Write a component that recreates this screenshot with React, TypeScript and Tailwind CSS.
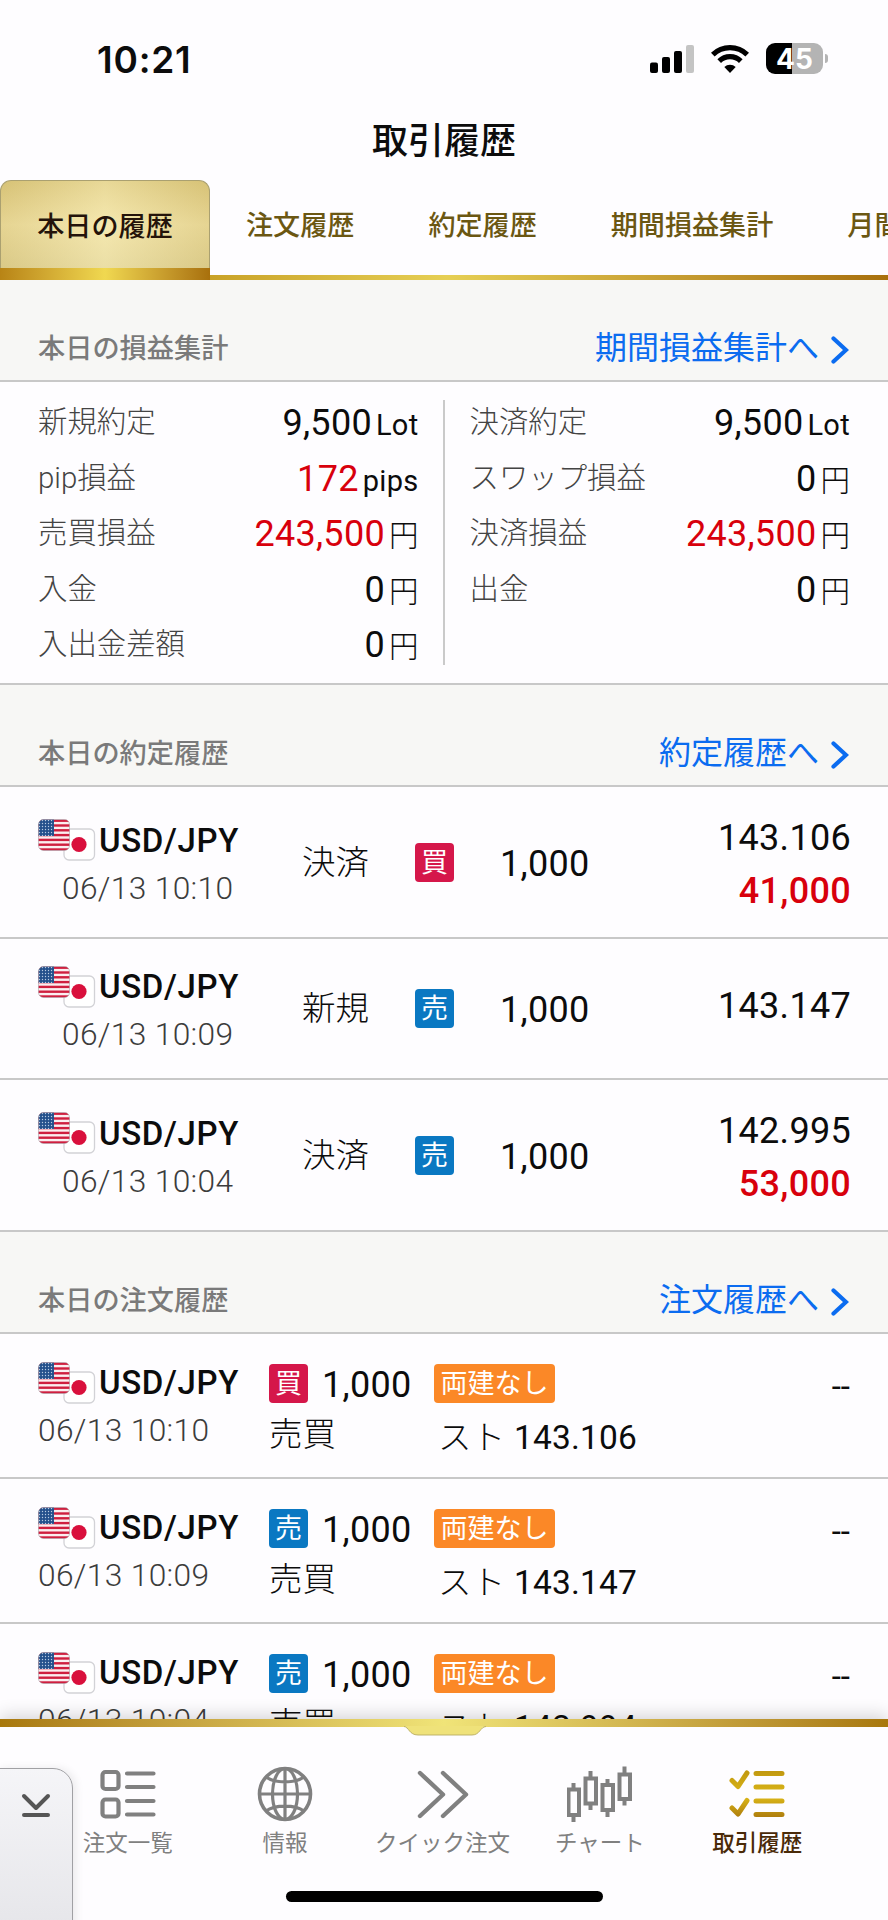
import type { ReactNode } from "react";

type Side = "buy" | "sell";

const tabs = ["注文履歴", "約定履歴", "期間損益集計", "月間損益集計"];

const summaryLeft = [
  { label: "新規約定", value: "9,500", unit: "Lot", red: false },
  { label: "pip損益", value: "172", unit: "pips", red: true },
  { label: "売買損益", value: "243,500", unit: "円", red: true },
  { label: "入金", value: "0", unit: "円", red: false },
  { label: "入出金差額", value: "0", unit: "円", red: false },
];

const summaryRight = [
  { label: "決済約定", value: "9,500", unit: "Lot", red: false },
  { label: "スワップ損益", value: "0", unit: "円", red: false },
  { label: "決済損益", value: "243,500", unit: "円", red: true },
  { label: "出金", value: "0", unit: "円", red: false },
];

const executions: { time: string; kind: string; side: Side; price: string; profit?: string }[] = [
  { time: "06/13 10:10", kind: "決済", side: "buy", price: "143.106", profit: "41,000" },
  { time: "06/13 10:09", kind: "新規", side: "sell", price: "143.147" },
  { time: "06/13 10:04", kind: "決済", side: "sell", price: "142.995", profit: "53,000" },
];

const orders: { time: string; side: Side; price: string }[] = [
  { time: "06/13 10:10", side: "buy", price: "143.106" },
  { time: "06/13 10:09", side: "sell", price: "143.147" },
  { time: "06/13 10:04", side: "sell", price: "142.994" },
];

function StatusBar() {
  return (
    <div className="flex h-[104px] shrink-0 items-start justify-between pl-[97px] pr-[60px]">
      <span className="mt-[36px] font-['Inter'] text-[37px] font-semibold leading-[47px] tracking-[0.8px]">10:21</span>
      <div className="mt-[43px] flex h-[31px] items-center">
        <svg width="45" height="31" viewBox="0 0 45 31">
          <rect x="0" y="19.5" width="8" height="10.5" rx="2" />
          <rect x="12" y="14" width="8" height="16" rx="2" />
          <rect x="24" y="8" width="8" height="22" rx="2" />
          <rect x="36" y="2" width="8" height="28" rx="2" fill="#c4c4c4" />
        </svg>
        <svg className="ml-[16px]" width="38" height="31" viewBox="0 0 38 31" fill="none" stroke="#000" strokeWidth="5.2">
          <path d="M1.8 11.6a24.6 24.6 0 0 1 34.4 0" />
          <path d="M8.2 18.1a15.5 15.5 0 0 1 21.6 0" />
          <path d="M19 30l-5.700-5.900a8.200 8.200 0 0 1 11.400 0z" fill="#000" stroke="none" />
        </svg>
        <div className="ml-[17px] flex h-[31px] w-[57px] items-center justify-center rounded-[9px] bg-linear-to-r from-black from-46% to-[#b4b4b4] to-46% font-['Inter'] text-[28px] font-bold leading-none text-white">
          45
        </div>
        <div className="ml-[2px] h-[9px] w-[3px] rounded-r-full bg-[#b4b4b4]" />
      </div>
    </div>
  );
}

function SectionHeader({ title, link }: { title: string; link: string }) {
  return (
    <div className="flex h-[102px] shrink-0 items-end border-b-2 border-[#c8c8c8] bg-[#f7f7f5] pl-[38px] pr-[39px]">
      <div className="flex h-[64px] flex-1 items-center justify-between">
        <span className="pt-[3px] text-[27.2px] font-medium text-[#7a7a7a]">{title}</span>
        <div className="flex items-center">
          <span className="text-[32px] leading-[60px] text-[#0b6cf0]">{link}</span>
          <svg className="ml-[12px] mt-[4px]" width="18" height="28" viewBox="0 0 18 28" fill="none" stroke="#0b6cf0" strokeWidth="4.2" strokeLinecap="round">
            <path d="M2.5 2.5L15 14L2.5 25.5" />
          </svg>
        </div>
      </div>
    </div>
  );
}

function SummaryColumn({ rows }: { rows: typeof summaryLeft }) {
  return (
    <div className="flex flex-1 flex-col">
      {rows.map((r) => (
        <div key={r.label} className="flex h-[55.6px] items-start justify-between leading-[55.6px]">
          <span className="text-[29.4px] font-light text-[#444]">{r.label}</span>
          <span className="flex items-baseline pt-px">
            <span className={r.red ? "text-[36px] tracking-[0.3px] text-[#d8000c]" : "text-[36px] tracking-[0.3px]"}>{r.value}</span>
            {r.unit === "円" ? (
              <span className="ml-[4px] text-[29.5px] font-light">円</span>
            ) : (
              <span className="ml-[4px] text-[29px] tracking-[0.3px]">{r.unit}</span>
            )}
          </span>
        </div>
      ))}
    </div>
  );
}

function Flags() {
  return (
    <svg className="shrink-0" width="58" height="42" viewBox="0 0 58 42">
      <defs>
        <clipPath id="us-flag">
          <rect x="0.5" y="0.5" width="31" height="31" rx="5" />
        </clipPath>
        <pattern id="us-stars" width="3" height="3" patternUnits="userSpaceOnUse">
          <rect width="3" height="3" fill="#24508c" />
          <circle cx="1.5" cy="1.5" r="0.7" fill="#b9cbe2" />
        </pattern>
      </defs>
      <rect x="26" y="10" width="30.5" height="31" rx="5" fill="#fff" stroke="#d2d2d6" strokeWidth="1.3" />
      <circle cx="41" cy="25.5" r="7.6" fill="#d9103c" />
      <g clipPath="url(#us-flag)">
        <rect width="32" height="32" fill="#fbeef0" />
        {[0, 1, 2, 3, 4, 5, 6].map((i) => (
          <rect key={i} y={0.5 + i * 4.8} width="32" height="2.4" fill="#cf1f3f" />
        ))}
        <rect width="16" height="17" fill="url(#us-stars)" />
      </g>
      <rect x="0.5" y="0.5" width="31" height="31" rx="5" fill="none" stroke="#9a8f99" strokeOpacity="0.5" />
    </svg>
  );
}

function Pair() {
  return (
    <div className="flex h-[47px] items-center">
      <Flags />
      <span className="ml-[3px] text-[33px] font-medium leading-[47px] tracking-[0.65px]">USD/JPY</span>
    </div>
  );
}

function SideChip({ side }: { side: Side }) {
  const color = side === "buy" ? "bg-[#d5174a]" : "bg-[#0a78c2]";
  return (
    <span className={`flex h-[39px] w-[39px] shrink-0 items-center justify-center rounded-[4px] pt-px text-[27px] leading-[38px] text-white ${color}`}>
      {side === "buy" ? "買" : "売"}
    </span>
  );
}

function NavItem({ label, active, children }: { label: string; active?: boolean; children: ReactNode }) {
  return (
    <div className="flex flex-col items-center">
      <div className="flex h-[60px] items-center justify-center">{children}</div>
      <span className={`mt-[3px] whitespace-nowrap text-[22.5px] leading-[32px] ${active ? "font-medium text-[#4a2a08]" : "text-[#808080]"}`}>
        {label}
      </span>
    </div>
  );
}

function BottomNav() {
  return (
    <div className="relative z-10 flex h-[201px] shrink-0 flex-col bg-[#fefdff] shadow-[0_-4px_16px_rgba(0,0,0,0.16)]">
      <div className="h-[8px] bg-linear-to-r from-[#a8780c] via-[#f0e478] to-[#a8780c]" />
      {/* Drawer handle under the gold line */}
      <svg className="absolute left-[404px] top-[7px]" width="82" height="10" viewBox="0 0 82 10">
        <path d="M0 0C5 1 5 9 14 9H68C76 9 76 1 82 0z" fill="#efe27a" />
        <path d="M0 0.5C5 1 5 9 14 9H68C76 9 76 1 82 0.5" fill="none" stroke="#b9ad62" strokeWidth="0.9" />
      </svg>
      <div className="ml-[49px] mt-[37px] grid w-[787px] grid-cols-5">
        <NavItem label="注文一覧">
          <svg width="56" height="50" viewBox="0 0 56 50" fill="none" stroke="#808080" strokeWidth="4.2" strokeLinecap="round">
            <rect x="2.5" y="3" width="16" height="17" rx="3" />
            <rect x="2.5" y="30.5" width="16" height="17" rx="3" />
            <path d="M27 4.5H53.5M27 18H53.5M27 32H53.5M27 45.5H53.5" />
          </svg>
        </NavItem>
        <NavItem label="情報">
          <svg width="56" height="56" viewBox="0 0 56 56" fill="none" stroke="#808080" strokeWidth="3.2">
            <circle cx="28" cy="28" r="25.5" strokeWidth="3.6" />
            <ellipse cx="28" cy="28" rx="12.5" ry="25.5" />
            <path d="M28 2V54M2 28H54M9 11C18 17.5 38 17.5 47 11M9 45C18 38.5 38 38.5 47 45" />
          </svg>
        </NavItem>
        <NavItem label="クイック注文">
          <svg className="ml-[2px]" width="54" height="50" viewBox="0 0 54 50" fill="none" stroke="#808080" strokeWidth="4.4" strokeLinecap="round" strokeLinejoin="round">
            <path d="M4 4L27 25.5L4 47M27 4L50 25.5L27 47" />
          </svg>
        </NavItem>
        <NavItem label="チャート">
          <svg width="66" height="58" viewBox="0 0 66 58" fill="none" stroke="#808080" strokeWidth="4">
            <path d="M1.5 24.500H12V50H1.500zM6.500 18V24M6.500 50V57" />
            <path d="M18.500 13.500H29V38.500H18.500zM23.500 6V13M23.500 39V45" />
            <path d="M35.500 20H46V45H35.500zM40.500 14V20M40.500 45V52" />
            <path d="M52.500 9.500H63V34H52.500zM57.500 1.500V9M57.500 34V40.500" />
          </svg>
        </NavItem>
        <NavItem label="取引履歴" active>
          <svg width="56" height="50" viewBox="0 0 56 50" fill="none" strokeLinecap="round" strokeLinejoin="round">
            <defs>
              <linearGradient id="gold" gradientUnits="userSpaceOnUse" x1="0" y1="0" x2="0" y2="50">
                <stop offset="0" stopColor="#bf960f" />
                <stop offset="0.55" stopColor="#dcb818" />
                <stop offset="1" stopColor="#aa780c" />
              </linearGradient>
            </defs>
            <g stroke="url(#gold)" strokeWidth="5">
              <path d="M3 11.5L9 17.500L18 4M3 39L9 45L18 31.500" />
              <path d="M27 4.500H53M27 18H53M27 32H53M27 45.500H53" />
            </g>
          </svg>
        </NavItem>
      </div>
      <div className="mb-[18px] ml-[286px] mt-auto h-[11px] w-[317px] shrink-0 rounded-full bg-black" />

      {/* Collapsed side panel */}
      <div className="absolute -left-[2px] top-[49px] h-[160px] w-[75px] rounded-tr-[20px] border border-[#a0a0a4] bg-linear-to-b from-[#f5f5f8] to-[#e6e6ea] shadow-[3px_0_8px_rgba(0,0,0,0.08)]">
        <svg className="ml-[21px] mt-[24px]" width="32" height="26" viewBox="0 0 32 26" fill="none" stroke="#555" strokeWidth="4" strokeLinecap="round" strokeLinejoin="round">
          <path d="M4 3L16 15L28 3M4 22H28" />
        </svg>
      </div>
    </div>
  );
}

export default function App() {
  return (
    <div className="flex h-[1920px] w-[888px] flex-col overflow-hidden bg-[#fefdff] font-['Roboto','Noto_Sans_CJK_JP',sans-serif] text-[#0c0c0c]">
      <StatusBar />
      <h1 className="h-[76px] shrink-0 text-center text-[36px] font-medium leading-[76px]">取引履歴</h1>

      {/* Tabs */}
      <div className="flex h-[100px] shrink-0 overflow-hidden whitespace-nowrap text-[27.1px] font-medium leading-[93px]">
        <div className="flex w-[210px] shrink-0 flex-col">
          <div className="h-[88px] rounded-t-[11px] border border-b-0 border-[#aaa070] bg-linear-to-b from-[#d9c67c] via-[#eee0a4] to-[#ddd094]">
            <div className="h-full rounded-t-[10px] bg-linear-to-r from-[#d2b968]/30 via-[#fff4c0]/40 to-[#d2b968]/30 text-center text-[#24130a]">本日の履歴</div>
          </div>
          <div className="h-[12px] bg-linear-to-r from-[#b88415] via-[#f0d850] to-[#a8700c]" />
        </div>
        <div className="flex shrink-0 flex-col">
          <div className="flex h-[95px]">
            {tabs.map((t) => (
              <span key={t} className="pl-[36px] pr-[38px] text-[#6b5712]">{t}</span>
            ))}
          </div>
          <div className="h-[5px] w-[678px] bg-linear-to-r from-[#c9a227] via-[#e6cf54] via-35% to-[#a8700c]" />
        </div>
      </div>

      <div className="flex min-h-0 flex-1 flex-col overflow-hidden">
        <SectionHeader title="本日の損益集計" link="期間損益集計へ" />
        <div className="flex h-[303px] shrink-0 border-b-2 border-[#c8c8c8] pl-[38px] pr-[38px] pt-[13px]">
          <SummaryColumn rows={summaryLeft} />
          <div className="ml-[24px] mr-[25px] mt-[5px] h-[265px] w-[2px] bg-[#cacaca]" />
          <SummaryColumn rows={summaryRight} />
        </div>

        <SectionHeader title="本日の約定履歴" link="約定履歴へ" />
        {executions.map((e) => (
          <div
            key={e.time}
            className={`flex shrink-0 items-center border-b-2 border-[#c8c8c8] pl-[38px] pr-[37px] ${e.profit ? "h-[152px]" : "h-[141px]"}`}
          >
            <div className="w-[264px] pt-[5px]">
              <Pair />
              <div className="pl-[24px] text-[31.7px] font-light leading-[49px] tracking-[0.35px] text-[#3c3c3c]">{e.time}</div>
            </div>
            <span className="w-[113px] pt-[2px] text-[33.5px] font-light">{e.kind}</span>
            <SideChip side={e.side} />
            <span className="ml-[46px] pt-[3px] text-[36px] tracking-[0.3px]">1,000</span>
            <div className={`ml-auto flex flex-col text-right text-[36px] leading-[53px] tracking-[0.3px] ${e.profit ? "pt-[5px]" : "pb-[5px]"}`}>
              <span>{e.price}</span>
              {e.profit && <span className="font-medium text-[#d8000c]">{e.profit}</span>}
            </div>
          </div>
        ))}

        <SectionHeader title="本日の注文履歴" link="注文履歴へ" />
        {orders.map((o) => (
          <div key={o.time} className="flex h-[145px] shrink-0 border-b-2 border-[#c8c8c8] pl-[38px] pr-[38px] pt-[25px]">
            <div className="w-[231px]">
              <Pair />
              <div className="text-[31.7px] font-light leading-[50px] tracking-[0.35px] text-[#3c3c3c]">{o.time}</div>
            </div>
            <div className="w-[165px]">
              <div className="flex h-[48px] items-center">
                <SideChip side={o.side} />
                <span className="ml-[14px] pt-[3px] text-[36px] tracking-[0.3px]">1,000</span>
              </div>
              <div className="text-[33.5px] font-light leading-[56px]">売買</div>
            </div>
            <div>
              <div className="flex h-[48px] items-center">
                <span className="flex h-[39px] w-[121px] items-center justify-center rounded-[4px] bg-[#fb8827] pt-px text-[27px] leading-[38px] text-white">両建なし</span>
              </div>
              <div className="pl-[4px] text-[33.5px] leading-[61px] tracking-[0.2px]">
                <span className="font-light">スト</span> {o.price}
              </div>
            </div>
            <span className="ml-auto text-[33px] leading-[56px]">--</span>
          </div>
        ))}
      </div>

      <BottomNav />
    </div>
  );
}
